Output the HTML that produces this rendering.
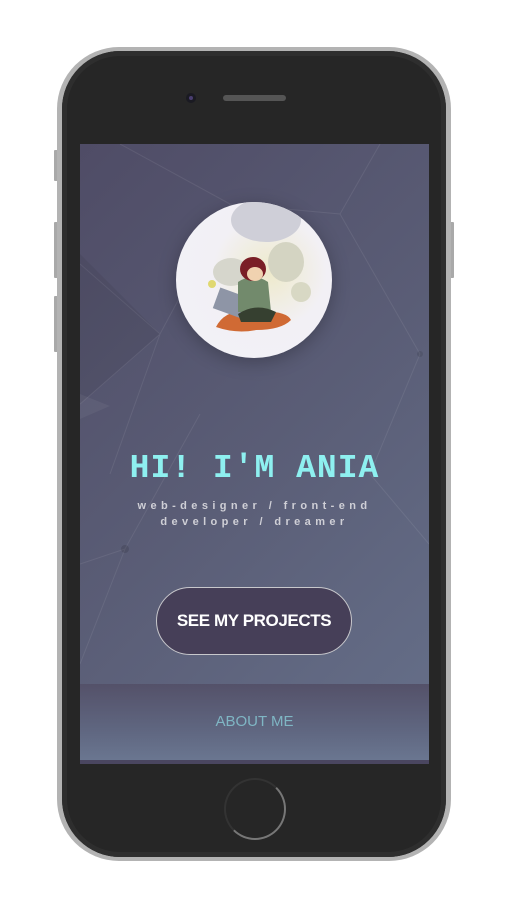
<!DOCTYPE html>
<html><head><style>
*{margin:0;padding:0;box-sizing:border-box}
body{width:507px;height:900px;background:#fff;position:relative;overflow:hidden;font-family:"Liberation Sans",sans-serif}
.btn{position:absolute;background:#a9a9a9;border-radius:1px}
.phone{position:absolute;left:57px;top:47px;width:394px;height:814px;border-radius:62px;background:#b3b3b3}
.body{position:absolute;left:62px;top:51px;width:384px;height:806px;border-radius:58px;background:#262626;box-shadow:inset 0 0 0 5px #2e2e2e}
.screen{position:absolute;left:80px;top:144px;width:349px;height:620px;background:linear-gradient(135deg,#4f4c66 0%,#5a5d76 50%,#66708a 100%);overflow:hidden}
.foot{position:absolute;left:0;top:540px;width:349px;height:76px;background:linear-gradient(180deg,#545169 0%,#5f6680 60%,#6a7690 100%);text-align:center;color:#7fb6c4;font-size:15px;line-height:76px}
.foot2{position:absolute;left:0;top:616px;width:349px;height:4px;background:#4a4660}
.av{position:absolute;left:96px;top:58px;width:156px;height:156px;border-radius:50%;background:radial-gradient(circle at 60% 45%,#eeeacb 0%,#f2f0f5 45%,#f3f2f7 100%);box-shadow:0 4px 18px rgba(0,0,0,.25);overflow:hidden}
h1{position:absolute;left:0;width:349px;top:306px;text-align:center;font-family:"Liberation Mono",monospace;font-weight:bold;font-size:33px;color:#8ef0f0;letter-spacing:1px}
.sub{position:absolute;left:0;width:349px;top:354px;text-align:center;font-size:11px;font-weight:bold;color:#cfcfd6;letter-spacing:4.4px;line-height:16px}
.cta{position:absolute;left:76px;top:443px;width:196px;height:68px;border-radius:34px;background:#463f58;border:1px solid #c8c8cc;color:#fff;font-weight:bold;font-size:17px;text-align:center;line-height:66px;letter-spacing:-.4px}
</style></head><body>
<div class="btn" style="left:54px;top:150px;width:4px;height:31px"></div>
<div class="btn" style="left:54px;top:222px;width:4px;height:56px"></div>
<div class="btn" style="left:54px;top:296px;width:4px;height:56px"></div>
<div class="btn" style="left:450px;top:222px;width:4px;height:56px"></div>
<div class="phone"></div>
<div class="body"></div>
<div style="position:absolute;left:186px;top:93px;width:10px;height:10px;border-radius:50%;background:#1a1a22"><div style="position:absolute;left:3px;top:3px;width:4px;height:4px;border-radius:50%;background:#4a3e70"></div></div>
<div style="position:absolute;left:223px;top:95px;width:63px;height:6px;border-radius:3px;background:#555"></div>
<div style="position:absolute;left:224px;top:778px;width:62px;height:62px;border-radius:50%;border:2px solid #777;border-top-color:#333;border-left-color:#333"></div>
<div class="screen">
<svg width="349" height="620" style="position:absolute;left:0;top:0" stroke="rgba(255,255,255,.08)" fill="none" stroke-width="1">
<path d="M0 120 L80 190 L150 60 L260 70 L340 210 M30 330 L80 190 L0 260 M150 60 L40 0 M260 70 L300 0 M0 420 L45 405 L120 270 M45 405 L0 520 M340 210 L290 330 L349 400 M80 190 L30 330"/>
<polygon points="0,110 80,190 0,260" fill="rgba(0,0,0,.06)" stroke="none"/>
<polygon points="0,250 30,262 0,275" fill="rgba(255,255,255,.05)" stroke="none"/>
<circle cx="45" cy="405" r="4" fill="rgba(0,0,0,.12)" stroke="none"/>
<circle cx="340" cy="210" r="3" fill="rgba(0,0,0,.1)" stroke="none"/>
</svg>
<div class="av">
<svg width="156" height="156">
<ellipse cx="90" cy="18" rx="35" ry="22" fill="#cfcfd8"/>
<ellipse cx="55" cy="70" rx="18" ry="14" fill="#d6d6cc"/>
<ellipse cx="110" cy="60" rx="18" ry="20" fill="#d4d4c2"/>
<ellipse cx="125" cy="90" rx="10" ry="10" fill="#d8d8c4"/>
<path d="M40 125 Q50 105 80 110 Q110 108 115 118 Q105 128 80 128 Q60 132 40 125Z" fill="#d06a34"/>
<rect x="40" y="90" width="30" height="22" fill="#8e95a6" transform="rotate(20 55 100)"/>
<path d="M62 80 Q77 70 92 80 L95 110 L62 110Z" fill="#728a6c"/>
<ellipse cx="77" cy="67" rx="13" ry="12" fill="#7a1e26"/>
<ellipse cx="79" cy="72" rx="8" ry="7" fill="#f0d2b0"/>
<path d="M62 112 Q80 100 100 110 L95 120 L65 120Z" fill="#364030"/>
<circle cx="36" cy="82" r="4" fill="#e0d870"/>
</svg>
</div>
<h1>HI! I'M ANIA</h1>
<div class="sub">web-designer / front-end<br>developer / dreamer</div>
<div class="cta">SEE MY PROJECTS</div>
<div class="foot">ABOUT ME</div>
<div class="foot2"></div>
</div>
</body></html>
